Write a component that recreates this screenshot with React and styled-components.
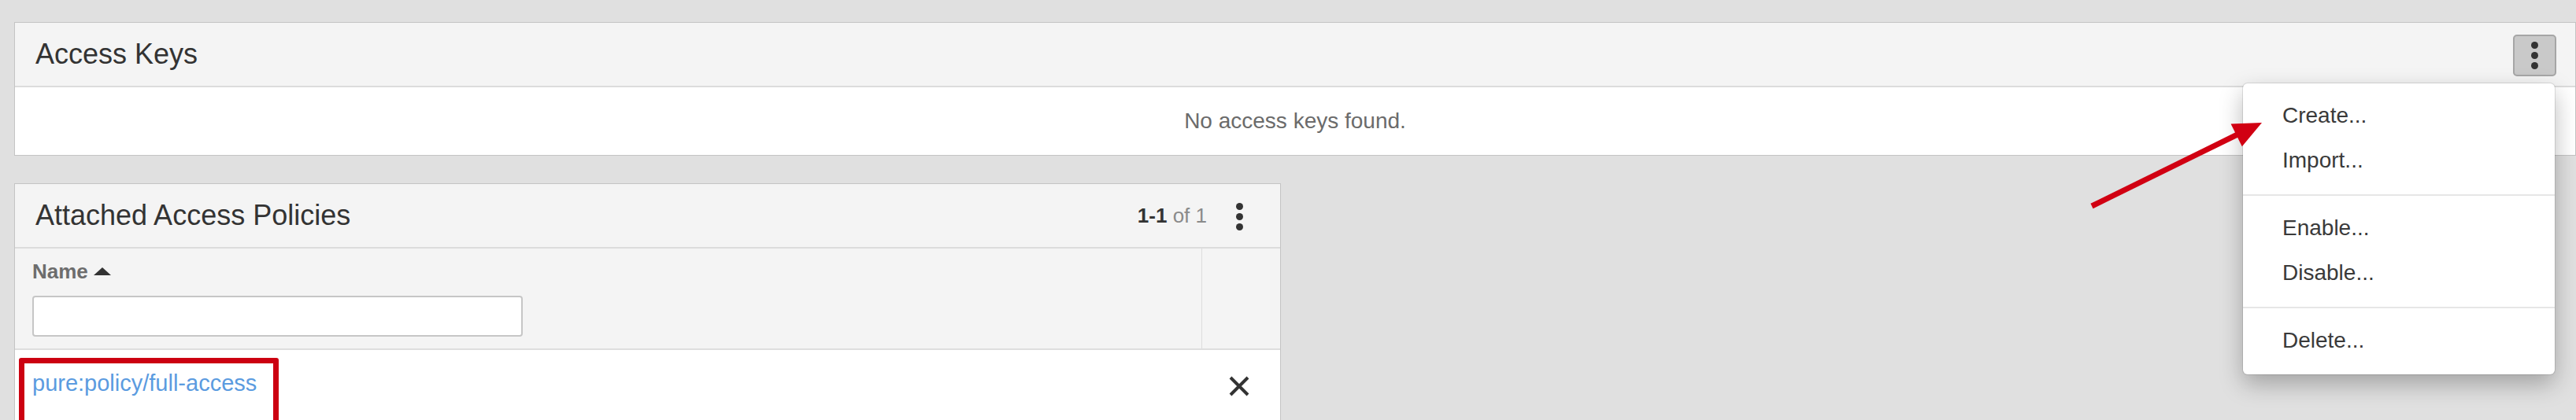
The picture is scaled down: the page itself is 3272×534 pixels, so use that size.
import React from 'react';
import styled, { createGlobalStyle } from 'styled-components';

const GlobalStyle = createGlobalStyle`
  html, body {
    margin: 0;
    padding: 0;
    background: #e0e0e0;
  }
  body {
    font-family: "Liberation Sans", Arial, sans-serif;
    color: #333;
    overflow: hidden;
  }
`;

const Page = styled.div`
  position: relative;
  width: 3272px;
  height: 534px;
  overflow: hidden;
  box-sizing: border-box;
  padding: 28px 0 0 18px;
  display: flex;
  flex-direction: column;
  align-items: flex-start;
  gap: 35px;
`;

const Panel = styled.section`
  width: ${(p) => p.$width}px;
  flex-shrink: 0;
  box-sizing: border-box;
  background: #fff;
  border: 1px solid #c4c4c4;
`;

const PanelHeader = styled.header`
  height: 82px;
  box-sizing: border-box;
  display: flex;
  align-items: center;
  padding: 0 24px 0 26px;
  background: #f4f4f4;
  border-bottom: 2px solid #dcdcdc;
`;

const Title = styled.h2`
  flex: 1;
  margin: 0;
  font-size: 36px;
  font-weight: 400;
  color: #333;
`;

const Pager = styled.span`
  font-size: 26px;
  color: #8a8a8a;
  margin-right: 14px;

  b {
    color: #333;
  }
`;

const KebabWrap = styled.div`
  position: relative;
`;

const KebabButton = styled.button`
  width: 55px;
  height: 53px;
  box-sizing: border-box;
  display: flex;
  flex-direction: column;
  align-items: center;
  justify-content: center;
  gap: 4px;
  padding: 0;
  margin-top: 2px;
  border: ${(p) => (p.$boxed ? '2px solid #a6a6a6' : 'none')};
  border-radius: 5px;
  background: ${(p) => (p.$boxed ? '#c9c9c9' : 'transparent')};
`;

const Dot = styled.span`
  width: 9px;
  height: 9px;
  border-radius: 50%;
  background: #333;
`;

const EmptyBody = styled.div`
  height: 86px;
  display: flex;
  align-items: center;
  justify-content: center;
  font-size: 28px;
  color: #6b6b6b;
`;

const Row = styled.div`
  display: grid;
  grid-template-columns: 1fr 100px;
  background: ${(p) => (p.$head ? '#f4f4f4' : '#fff')};
  border-bottom: ${(p) => (p.$head ? '2px solid #dedede' : 'none')};
`;

const HeadCell = styled.div`
  display: flex;
  flex-direction: column;
  gap: 16px;
  padding: 14px 0 15px 22px;
`;

const SideCell = styled.div`
  border-left: ${(p) => (p.$line ? '1px solid #dcdcdc' : 'none')};
  display: flex;
  justify-content: center;
  padding: ${(p) => (p.$line ? '0' : '33px 4px 0 0')};
`;

const SortLabel = styled.div`
  display: flex;
  align-items: center;
  gap: 7px;
  height: 30px;
  font-size: 26px;
  font-weight: 700;
  color: #6d6d6d;
`;

const FilterInput = styled.input`
  width: 623px;
  height: 52px;
  box-sizing: border-box;
  border: 2px solid #c6c6c6;
  border-radius: 4px;
  background: #fff;
  outline: none;
`;

const DataCell = styled.div`
  padding: 10px 0 0 5px;
  height: 100px;
  box-sizing: border-box;
`;

const Highlight = styled.div`
  width: 330px;
  box-sizing: border-box;
  border: 7px solid #cc0011;
  border-radius: 3px;
  padding: 8px 10px 30px;
`;

const PolicyLink = styled.a`
  font-size: 29px;
  line-height: 34px;
  color: #5b9be0;
  text-decoration: none;
  white-space: nowrap;
`;

const Menu = styled.div`
  position: absolute;
  top: calc(100% + 9px);
  right: 2px;
  width: 396px;
  z-index: 10;
  background: #fff;
  border-radius: 6px;
  box-shadow: 0 12px 30px rgba(0, 0, 0, 0.28), 0 0 0 1px rgba(0, 0, 0, 0.1);
`;

const MenuGroup = styled.div`
  padding: 12px 0 15px;
  & + & {
    border-top: 2px solid #e6e6e6;
  }
`;

const MenuItem = styled.div`
  height: 57px;
  line-height: 57px;
  padding-left: 50px;
  font-size: 28px;
  color: #3a3a3a;
`;

const Annotation = styled.svg`
  position: absolute;
  left: 2640px;
  top: 140px;
  z-index: 20;
`;

const Kebab = ({ boxed }) => (
  <KebabButton $boxed={boxed}>
    <Dot />
    <Dot />
    <Dot />
  </KebabButton>
);

const menuGroups = [['Create...', 'Import...'], ['Enable...', 'Disable...'], ['Delete...']];

const App = () => (
  <>
    <GlobalStyle />
    <Page>
      <Panel $width={3254}>
        <PanelHeader>
          <Title>Access Keys</Title>
          <KebabWrap>
            <Kebab boxed />
            <Menu>
              {menuGroups.map((group, i) => (
                <MenuGroup key={i}>
                  {group.map((item) => (
                    <MenuItem key={item}>{item}</MenuItem>
                  ))}
                </MenuGroup>
              ))}
            </Menu>
          </KebabWrap>
        </PanelHeader>
        <EmptyBody>No access keys found.</EmptyBody>
      </Panel>

      <Panel $width={1609}>
        <PanelHeader>
          <Title>Attached Access Policies</Title>
          <Pager>
            <b>1-1</b> of 1
          </Pager>
          <Kebab />
        </PanelHeader>
        <Row $head>
          <HeadCell>
            <SortLabel>
              Name
              <svg width="22" height="10" viewBox="0 0 22 10">
                <polygon points="11,0 22,10 0,10" fill="#333" />
              </svg>
            </SortLabel>
            <FilterInput type="text" />
          </HeadCell>
          <SideCell $line />
        </Row>
        <Row>
          <DataCell>
            <Highlight>
              <PolicyLink href="#">pure:policy/full-access</PolicyLink>
            </Highlight>
          </DataCell>
          <SideCell>
            <svg width="26" height="26" viewBox="0 0 26 26">
              <path d="M2 2 L24 24 M24 2 L2 24" stroke="#333" strokeWidth="4" />
            </svg>
          </SideCell>
        </Row>
      </Panel>

      <Annotation width="250" height="140" viewBox="0 0 250 140">
        <line x1="17" y1="122" x2="202" y2="31" stroke="#d10012" strokeWidth="7" />
        <polygon points="233,16 193.6,17.5 207.8,46.3" fill="#d10012" />
      </Annotation>
    </Page>
  </>
);

export default App;
